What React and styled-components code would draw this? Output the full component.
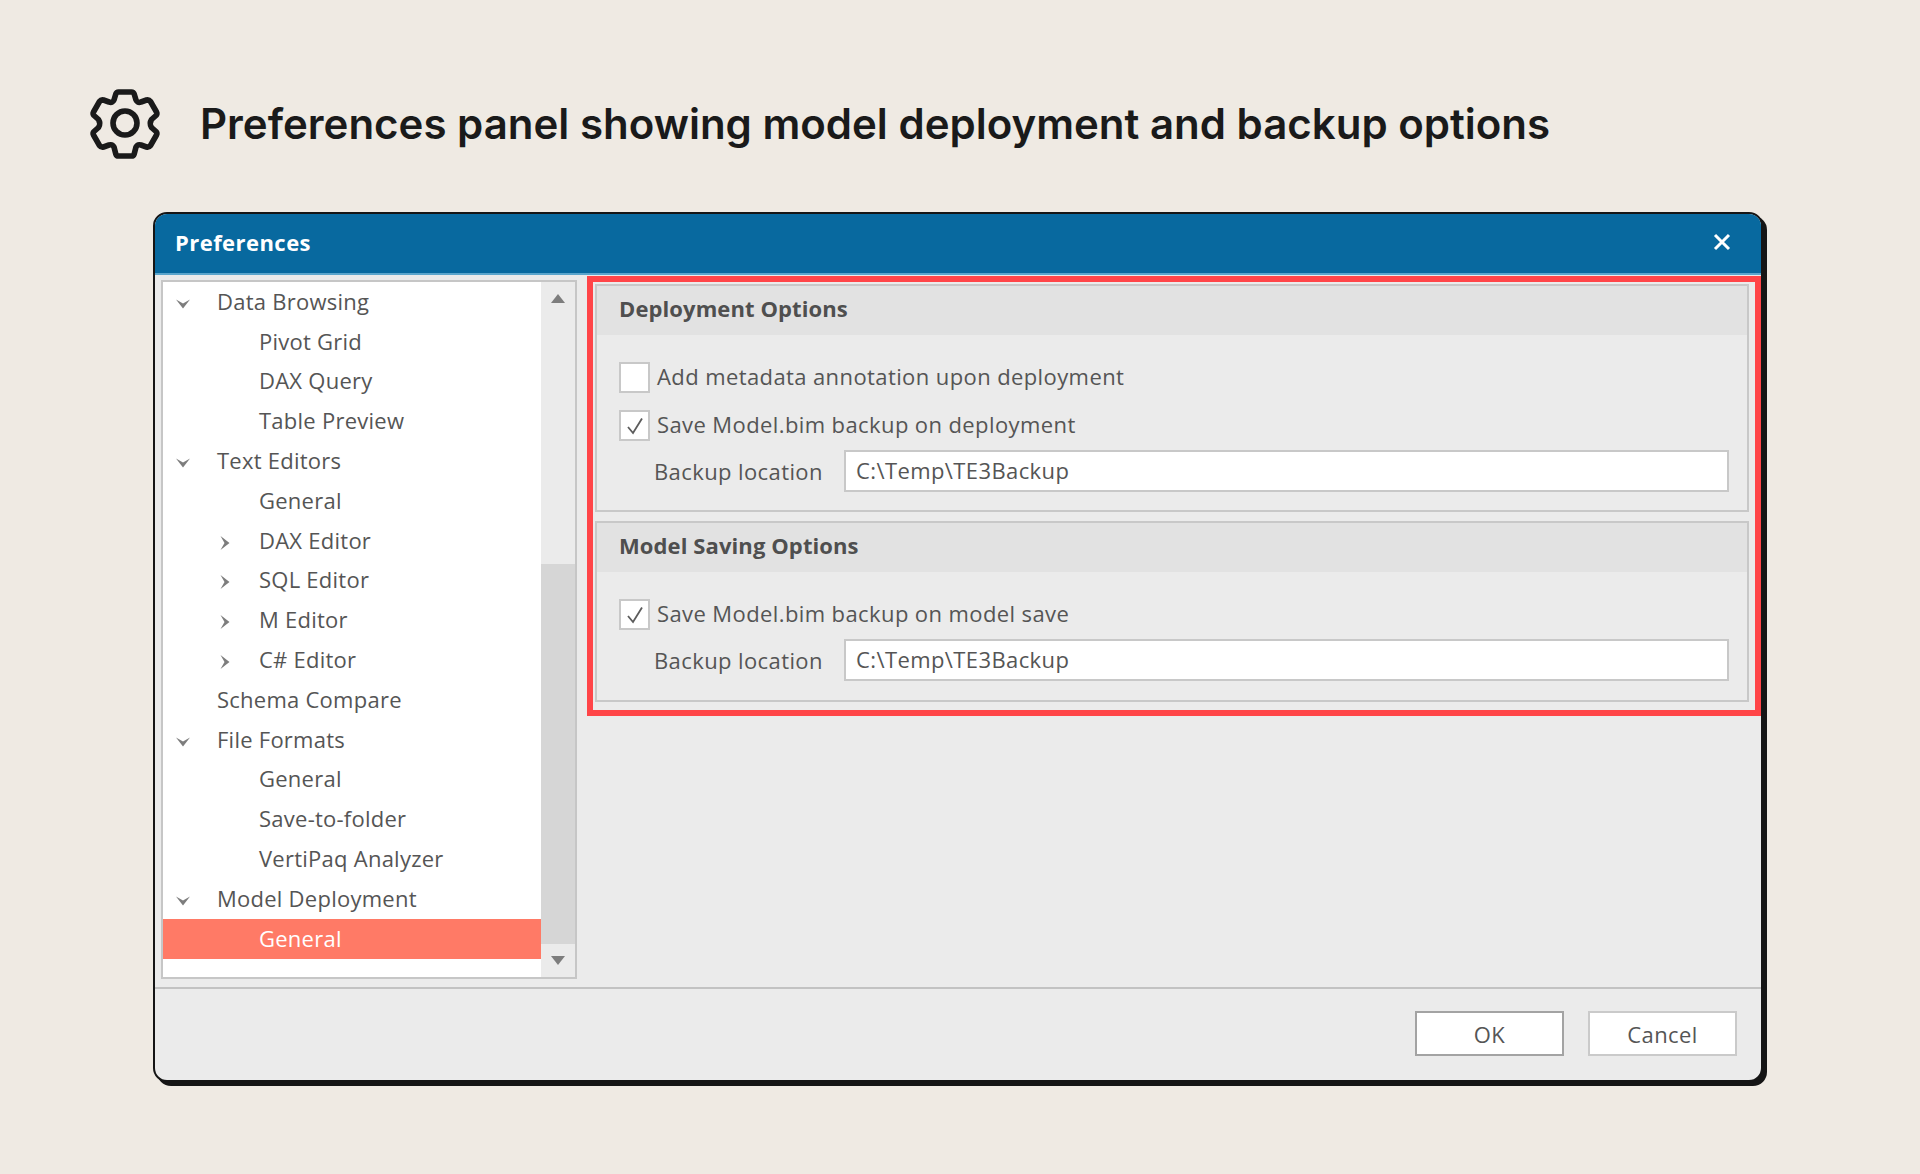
import React from 'react';
import styled, { createGlobalStyle } from 'styled-components';

const GlobalStyle = createGlobalStyle`
  html, body {
    margin: 0;
    padding: 0;
    background: #efeae3;
  }
  * {
    box-sizing: border-box;
  }
`;

const Page = styled.div`
  width: 1920px;
  height: 1174px;
  padding-top: 80px;
  background: #efeae3;
  overflow: hidden;
`;

const Header = styled.header`
  height: 90px;
  margin-left: 80px;
  margin-bottom: 42px;
  display: flex;
  align-items: center;
  gap: 30px;
  color: #1a1a1a;
`;

const Heading = styled.h1`
  margin: 0 0 4px;
  font-family: Inter, sans-serif;
  font-size: 42px;
  font-weight: 600;
  white-space: nowrap;
`;

const Dialog = styled.div`
  width: 1610px;
  height: 870px;
  margin-left: 153px;
  display: flex;
  flex-direction: column;
  background: #ebebeb;
  border: 2px solid #151515;
  border-radius: 14px;
  box-shadow: 4px 4px 0 #151515;
  overflow: hidden;
  font-family: 'Open Sans', sans-serif;
  font-size: 22px;
  letter-spacing: 0.4px;
  color: #555;
`;

const TitleBar = styled.div`
  height: 61px;
  flex: none;
  padding: 0 30px 4px 20px;
  display: flex;
  align-items: center;
  justify-content: space-between;
  background: #08699f;
  border-bottom: 2px solid #5aa5cc;
  color: #fff;
  font-weight: 700;
  font-size: 22px;
  letter-spacing: 0.45px;
`;

const Content = styled.div`
  flex: 1;
  display: flex;
  align-items: flex-start;
  gap: 10px;
`;

const TreePanel = styled.div`
  width: 416px;
  height: 699px;
  margin: 5px 0 0 6px;
  display: flex;
  border: 2px solid #c6c6c6;
`;

const TreeList = styled.div`
  flex: 1;
  background: #fff;
  letter-spacing: 0.25px;
`;

const TreeRow = styled.div`
  height: 39.8px;
  padding-left: ${({ $depth }) => 12 + $depth * 42}px;
  padding-bottom: 2px;
  display: flex;
  align-items: center;
  background: ${({ $selected }) => ($selected ? '#ff7a66' : 'transparent')};
  color: ${({ $selected }) => ($selected ? '#fff' : '#555')};
  white-space: nowrap;
`;

const Expander = styled.span`
  width: 42px;
  flex: none;
  display: flex;
  align-items: center;
  padding-top: 6px;
`;

const Scrollbar = styled.div`
  width: 34px;
  flex: none;
  display: flex;
  flex-direction: column;
  background: #ebebeb;
`;

const ScrollButton = styled.div`
  height: 33px;
  flex: none;
  display: flex;
  align-items: center;
  justify-content: center;
`;

const ScrollTrack = styled.div`
  flex: 1;
  display: flex;
  flex-direction: column;
  justify-content: flex-end;
`;

const ScrollThumb = styled.div`
  height: 380px;
  background: #d6d6d6;
`;

const Highlight = styled.div`
  width: 1174px;
  margin-top: 1px;
  padding: 2px 6px 8px 2px;
  display: flex;
  flex-direction: column;
  gap: 9px;
  border: 6px solid #ff4548;
`;

const Group = styled.section`
  border: 2px solid #c8c8c8;
`;

const GroupTitle = styled.div`
  height: 49px;
  padding: 0 0 5px 22px;
  display: flex;
  align-items: center;
  background: #e2e2e2;
  font-weight: 700;
  letter-spacing: 0.1px;
  color: #4f4f4f;
`;

const GroupBody = styled.div`
  padding: 27px 18px ${({ $bottom }) => $bottom}px 22px;
  display: flex;
  flex-direction: column;
`;

const CheckRow = styled.div`
  height: 31px;
  margin-bottom: ${({ $gap }) => $gap}px;
  display: flex;
  align-items: center;
  gap: 7px;
`;

const CheckBox = styled.span`
  width: 31px;
  height: 31px;
  flex: none;
  display: flex;
  align-items: center;
  justify-content: center;
  background: #fff;
  border: 2px solid #c8c8c8;
`;

const CheckLabel = styled.span`
  padding-bottom: 3px;
`;

const FieldRow = styled.div`
  padding-left: 35px;
  display: flex;
  align-items: center;
`;

const FieldLabel = styled.span`
  width: 190px;
  flex: none;
  padding-bottom: 2px;
`;

const PathInput = styled.input`
  flex: 1;
  height: 42px;
  margin-top: -1px;
  padding: 0 10px 3px;
  background: #fff;
  border: 2px solid #c8c8c8;
  border-radius: 0;
  outline: none;
  font: inherit;
  letter-spacing: inherit;
  color: #555;
`;

const Footer = styled.div`
  height: 93px;
  flex: none;
  padding: 22px 24px 0 0;
  display: flex;
  justify-content: flex-end;
  gap: 24px;
  border-top: 2px solid #c2c2c2;
`;

const DialogButton = styled.button`
  width: 149px;
  height: 45px;
  padding: 0;
  background: #fff;
  border: 2px solid ${({ $primary }) => ($primary ? '#a3a3a3' : '#cacaca')};
  border-radius: 0;
  font: inherit;
  letter-spacing: inherit;
  color: #555;
`;

const treeItems = [
  { label: 'Data Browsing', depth: 0, arrow: 'down' },
  { label: 'Pivot Grid', depth: 1 },
  { label: 'DAX Query', depth: 1 },
  { label: 'Table Preview', depth: 1 },
  { label: 'Text Editors', depth: 0, arrow: 'down' },
  { label: 'General', depth: 1 },
  { label: 'DAX Editor', depth: 1, arrow: 'right' },
  { label: 'SQL Editor', depth: 1, arrow: 'right' },
  { label: 'M Editor', depth: 1, arrow: 'right' },
  { label: 'C# Editor', depth: 1, arrow: 'right' },
  { label: 'Schema Compare', depth: 0 },
  { label: 'File Formats', depth: 0, arrow: 'down' },
  { label: 'General', depth: 1 },
  { label: 'Save-to-folder', depth: 1 },
  { label: 'VertiPaq Analyzer', depth: 1 },
  { label: 'Model Deployment', depth: 0, arrow: 'down' },
  { label: 'General', depth: 1, selected: true },
];

const GearIcon = () => (
  <svg width="90" height="90" viewBox="0 0 90 90" fill="none" stroke="currentColor" strokeWidth="5.6" strokeLinejoin="round">
    <path d="M38.5 12 H51.5 Q53.5 12 54.2 14 L56 20 Q57.5 23.5 61 22 L66.5 20 Q69 19.5 70.5 21.5 L76.5 32 Q77.5 34 76 35.5 L71.5 39.5 Q69 43.5 71.5 47.5 L76 51.5 Q77.5 53 76.5 55 L70.5 65.5 Q69 67.5 66.5 67 L61 65 Q57.5 64 56 67 L54.2 74 Q53.5 76 51.5 76 H38.5 Q36.5 76 35.8 74 L34 67 Q32.5 64 29 65 L23.5 67 Q21 67.5 19.5 65.5 L13.5 55 Q12.5 53 14 51.5 L18.5 47.5 Q21 43.5 18.5 39.5 L14 35.5 Q12.5 34 13.5 32 L19.5 21.5 Q21 19.5 23.5 20 L29 22 Q32.5 23.5 34 20 L35.8 14 Q36.5 12 38.5 12 Z" />
    <circle cx="45" cy="43" r="12" />
  </svg>
);

const ArrowDown = () => (
  <svg width="16" height="10" viewBox="0 0 16 10">
    <path d="M1 0.5 L8 4.5 L15 0.5 L8 9.5 Z" fill="#7d7d7d" />
  </svg>
);

const ArrowRight = () => (
  <svg width="10" height="16" viewBox="0 0 10 16" style={{ marginLeft: 3 }}>
    <path d="M0.5 1 L4.5 8 L0.5 15 L9.5 8 Z" fill="#7d7d7d" />
  </svg>
);

const Triangle = ({ up }) => (
  <svg width="14" height="9" viewBox="0 0 14 9">
    <path d={up ? 'M7 0 L14 9 L0 9 Z' : 'M0 0 L14 0 L7 9 Z'} fill="#7d7d7d" />
  </svg>
);

const Tick = () => (
  <svg width="18" height="18" viewBox="0 0 18 18" fill="none">
    <path d="M2 10 L7 16 L16 1.5" stroke="#5c5c5c" strokeWidth="1.8" />
  </svg>
);

const CloseIcon = () => (
  <svg width="18" height="18" viewBox="0 0 18 18" fill="none">
    <path d="M2 2 L16 16 M16 2 L2 16" stroke="#fff" strokeWidth="3" />
  </svg>
);

const Check = ({ label, checked, gap }) => (
  <CheckRow $gap={gap}>
    <CheckBox>{checked && <Tick />}</CheckBox>
    <CheckLabel>{label}</CheckLabel>
  </CheckRow>
);

const BackupField = () => (
  <FieldRow>
    <FieldLabel>Backup location</FieldLabel>
    <PathInput readOnly value="C:\Temp\TE3Backup" />
  </FieldRow>
);

const App = () => {
  return (
    <>
      <GlobalStyle />
      <Page>
        <Header>
          <GearIcon />
          <Heading>Preferences panel showing model deployment and backup options</Heading>
        </Header>
        <Dialog>
          <TitleBar>
            Preferences
            <CloseIcon />
          </TitleBar>
          <Content>
            <TreePanel>
              <TreeList>
                {treeItems.map((item, index) => (
                  <TreeRow key={index} $depth={item.depth} $selected={item.selected}>
                    <Expander>
                      {item.arrow === 'down' && <ArrowDown />}
                      {item.arrow === 'right' && <ArrowRight />}
                    </Expander>
                    {item.label}
                  </TreeRow>
                ))}
              </TreeList>
              <Scrollbar>
                <ScrollButton><Triangle up /></ScrollButton>
                <ScrollTrack><ScrollThumb /></ScrollTrack>
                <ScrollButton><Triangle /></ScrollButton>
              </Scrollbar>
            </TreePanel>
            <Highlight>
              <Group>
                <GroupTitle>Deployment Options</GroupTitle>
                <GroupBody $bottom={18}>
                  <Check label="Add metadata annotation upon deployment" gap={17} />
                  <Check label="Save Model.bim backup on deployment" checked gap={10} />
                  <BackupField />
                </GroupBody>
              </Group>
              <Group>
                <GroupTitle>Model Saving Options</GroupTitle>
                <GroupBody $bottom={19}>
                  <Check label="Save Model.bim backup on model save" checked gap={10} />
                  <BackupField />
                </GroupBody>
              </Group>
            </Highlight>
          </Content>
          <Footer>
            <DialogButton $primary>OK</DialogButton>
            <DialogButton>Cancel</DialogButton>
          </Footer>
        </Dialog>
      </Page>
    </>
  );
};

export default App;
